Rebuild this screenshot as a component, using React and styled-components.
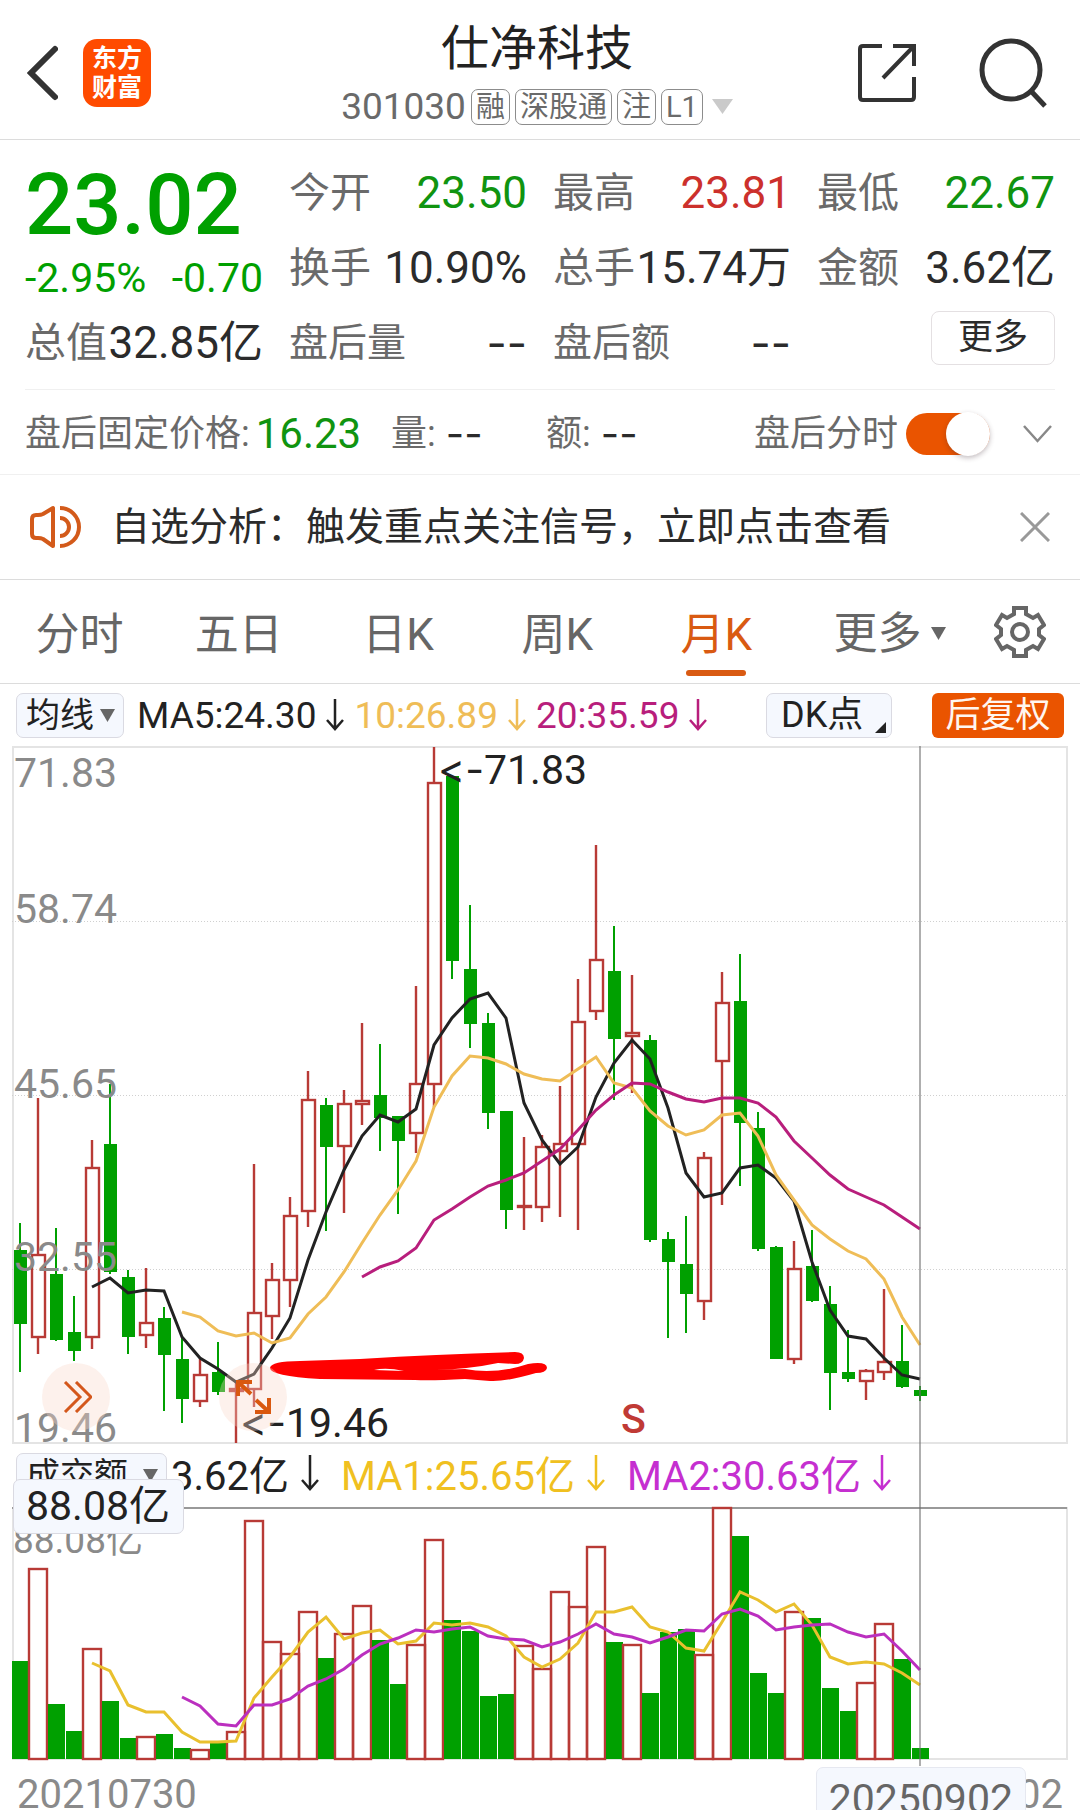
import { useState } from "react";
import styled, { createGlobalStyle, css } from "styled-components";

const GREEN = "#00a000";
const RED = "#b83a36";
const ORANGE = "#ea5400";

const GlobalStyle = createGlobalStyle`
  * {
    box-sizing: border-box;
  }

  body {
    margin: 0;
    background: #fff;
    color: #2b2b2b;
    font-family: Roboto, "Noto Sans CJK SC", sans-serif;
  }

  button,
  select {
    margin: 0;
    padding: 0;
    border: 0;
    background: none;
    color: inherit;
    font-family: inherit;
  }

  svg {
    display: block;
    flex: none;
  }
`;

/* ---------- data ---------- */

const FIRST_X = 20;
const STEP = 18;

// [rise, high, body top, body bottom, low]
const candles = [
  [0, 1223, 1250, 1324, 1372],
  [1, 1098, 1255, 1337, 1354],
  [0, 1228, 1274, 1340, 1341],
  [0, 1296, 1332, 1351, 1361],
  [1, 1140, 1168, 1337, 1349],
  [0, 1084, 1144, 1272, 1274],
  [0, 1270, 1277, 1337, 1354],
  [1, 1268, 1323, 1335, 1348],
  [0, 1307, 1318, 1355, 1411],
  [0, 1337, 1359, 1399, 1423],
  [1, 1359, 1375, 1401, 1407],
  [0, 1342, 1372, 1392, 1395],
  [1, 1382, 1389, 1391, 1443],
  [1, 1164, 1313, 1389, 1407],
  [1, 1263, 1280, 1316, 1339],
  [1, 1197, 1216, 1280, 1307],
  [1, 1071, 1100, 1211, 1227],
  [0, 1098, 1105, 1147, 1231],
  [1, 1090, 1104, 1146, 1213],
  [1, 1023, 1101, 1104, 1125],
  [0, 1044, 1095, 1118, 1151],
  [0, 1116, 1116, 1141, 1214],
  [1, 986, 1084, 1133, 1153],
  [1, 747, 783, 1084, 1107],
  [0, 776, 776, 961, 979],
  [0, 905, 969, 1024, 1048],
  [0, 1013, 1023, 1113, 1129],
  [0, 1111, 1111, 1210, 1229],
  [1, 1137, 1206, 1207, 1230],
  [1, 1135, 1147, 1207, 1222],
  [1, 1086, 1144, 1151, 1217],
  [1, 979, 1022, 1144, 1230],
  [1, 845, 960, 1011, 1020],
  [0, 926, 971, 1039, 1100],
  [1, 975, 1033, 1036, 1093],
  [0, 1035, 1040, 1240, 1242],
  [0, 1232, 1239, 1262, 1338],
  [0, 1216, 1264, 1294, 1333],
  [1, 1152, 1158, 1301, 1320],
  [1, 972, 1003, 1061, 1205],
  [0, 954, 1001, 1123, 1186],
  [0, 1112, 1128, 1249, 1251],
  [0, 1246, 1247, 1359, 1359],
  [1, 1241, 1269, 1359, 1364],
  [0, 1230, 1266, 1301, 1302],
  [0, 1286, 1304, 1373, 1410],
  [0, 1330, 1372, 1379, 1382],
  [1, 1369, 1371, 1381, 1400],
  [1, 1289, 1362, 1372, 1380],
  [0, 1325, 1361, 1387, 1388],
  [0, 1386, 1390, 1396, 1401],
];

const ma5 = [
  1287, 1278, 1293, 1290, 1291, 1337, 1358, 1369, 1382, 1374, 1348, 1318, 1260,
  1212, 1170, 1136, 1115, 1122, 1109, 1045, 1018, 999, 993, 1018, 1103, 1140,
  1164, 1147, 1097, 1063, 1040, 1059, 1108, 1173, 1197, 1193, 1168, 1165, 1178,
  1201, 1262, 1310, 1336, 1339, 1358, 1375, 1379,
];

const ma10 = [
  1312, 1317, 1331, 1336, 1333, 1343, 1338, 1314, 1297, 1272, 1243, 1215, 1190,
  1161, 1107, 1076, 1056, 1058, 1064, 1074, 1079, 1081, 1069, 1057, 1083, 1088,
  1111, 1126, 1135, 1130, 1115, 1113, 1136, 1175, 1200, 1225, 1239, 1251, 1259,
  1279, 1317, 1345,
];

const ma20 = [
  1277, 1267, 1261, 1248, 1220, 1209, 1197, 1186, 1180, 1173, 1161, 1149, 1130,
  1110, 1095, 1083, 1084, 1092, 1099, 1102, 1098, 1098, 1103, 1117, 1141, 1158,
  1175, 1189, 1197, 1205, 1217, 1229,
];

// top of each turnover bar, the colour follows the candle
const volumes = [
  1661, 1569, 1704, 1731, 1649, 1701, 1738, 1737, 1734, 1748, 1750, 1743, 1732,
  1521, 1642, 1654, 1612, 1658, 1634, 1606, 1640, 1684, 1645, 1540, 1620, 1631,
  1696, 1694, 1646, 1669, 1592, 1607, 1547, 1642, 1645, 1693, 1632, 1629, 1655,
  1508, 1536, 1673, 1693, 1612, 1618, 1688, 1711, 1683, 1624, 1659, 1748,
];

const volMa1 = [
  1663, 1671, 1705, 1712, 1712, 1732, 1742, 1742, 1741, 1698, 1677, 1657, 1632,
  1617, 1639, 1633, 1630, 1644, 1641, 1623, 1625, 1623, 1627, 1636, 1657, 1667,
  1659, 1643, 1612, 1612, 1607, 1627, 1632, 1648, 1651, 1622, 1592, 1600, 1612,
  1604, 1625, 1657, 1664, 1662, 1664, 1673, 1685,
];

const volMa2 = [
  1697, 1706, 1724, 1726, 1705, 1705, 1699, 1686, 1679, 1669, 1655, 1644, 1638,
  1630, 1632, 1629, 1627, 1636, 1639, 1640, 1647, 1642, 1634, 1624, 1634, 1637,
  1643, 1637, 1630, 1631, 1614, 1609, 1616, 1630, 1627, 1625, 1624, 1632, 1637,
  1634, 1651, 1670,
];

const priceLabels = [
  ["71.83", 787],
  ["58.74", 923],
  ["45.65", 1098],
  ["32.55", 1271],
  ["19.46", 1442],
];

const tabs = ["分时", "五日", "日K", "周K", "月K"];

const toPoints = (values, start) =>
  values.map((y, i) => `${FIRST_X + STEP * (start + i)},${y}`).join(" ");

/* ---------- header ---------- */

const Header = styled.header`
  display: grid;
  grid-template-columns: 1fr auto 1fr;
  align-items: center;
  height: 140px;
  padding: 6px 33px 0 27px;
  border-bottom: 1px solid #dcdcdc;
`;

const HeaderSide = styled.div`
  display: flex;
  align-items: center;
  justify-content: ${(props) => (props.$end ? "flex-end" : "flex-start")};
  gap: ${(props) => (props.$end ? "63px" : "25px")};
`;

const IconButton = styled.button`
  display: flex;
  align-items: center;
  justify-content: center;
  cursor: pointer;
`;

const Logo = styled.a`
  display: grid;
  place-content: center;
  width: 68px;
  height: 68px;
  border-radius: 14px;
  background: #ff4b00;
  color: #fff;
  font-size: 25px;
  font-weight: 700;
  line-height: 29px;
  text-align: center;
  text-decoration: none;
`;

const Heading = styled.div`
  display: flex;
  flex-direction: column;
  align-items: center;
  gap: 12px;
`;

const Title = styled.h1`
  margin: 0;
  font-size: 48px;
  font-weight: 400;
  line-height: 56px;
  color: #222;
`;

const Meta = styled.div`
  display: flex;
  align-items: center;
  gap: 5px;
  color: #6a6a6a;
`;

const Code = styled.span`
  font-size: 37px;
  line-height: 36px;
`;

const Tag = styled.span`
  height: 36px;
  padding: 0 4px;
  border: 1px solid #8c8c8c;
  border-radius: 7px;
  font-size: 29px;
  line-height: 34px;
`;

const MetaCaret = styled.svg`
  margin-left: 4px;
`;

/* ---------- quote ---------- */

const Quote = styled.section`
  display: grid;
  grid-template-columns: repeat(4, 1fr);
  grid-auto-rows: 75px;
  column-gap: 26px;
  margin: 0 25px;
  padding: 15px 0 9px;
  border-bottom: 1px solid #f0f0f0;
`;

const LastPrice = styled.div`
  grid-row: span 2;
  color: ${GREEN};
`;

const Price = styled.div`
  padding-top: 4px;
  font-size: 85px;
  font-weight: 500;
  line-height: 92px;
`;

const Change = styled.div`
  display: flex;
  justify-content: space-between;
  font-size: 41px;
  line-height: 54px;
`;

const Stat = styled.div`
  display: flex;
  align-items: center;
  justify-content: space-between;
  white-space: nowrap;
`;

const StatLabel = styled.span`
  font-size: ${(props) => (props.$small ? "39px" : "41px")};
  line-height: 56px;
  color: #6a6a6a;
`;

const StatValue = styled.span`
  font-size: 44px;
  line-height: 56px;
  color: ${(props) => props.$color || "#2b2b2b"};
`;

const Dashes = styled.span`
  font-family: Inter, sans-serif;
  font-size: 44px;
  font-feature-settings: "calt" 0;
  line-height: 56px;
`;

const MoreButton = styled.button`
  justify-self: end;
  align-self: start;
  width: 124px;
  height: 54px;
  margin-top: 6px;
  border: 1px solid #e4e0e2;
  border-radius: 8px;
  font-size: 35px;
  line-height: 48px;
  cursor: pointer;
`;

/* ---------- after hours ---------- */

const AfterHours = styled.section`
  display: grid;
  grid-template-columns: 366px 155px 1fr auto 29px;
  align-items: center;
  height: 85px;
  padding: 3px 28px 0 25px;
  border-bottom: 1px solid #f0f0f0;
  font-size: 36px;
  color: #6a6a6a;
`;

const Pair = styled.div`
  display: flex;
  align-items: center;
  gap: ${(props) => props.$gap || 0}px;
  line-height: 52px;
  white-space: nowrap;
`;

const FixedPrice = styled.span`
  font-size: 42px;
  color: #109410;
`;

const SmallDashes = styled(Dashes)`
  font-size: 40px;
  color: #2b2b2b;
`;

const SwitchLabel = styled.label`
  display: flex;
  align-items: center;
  gap: 8px;
  margin-right: 33px;
  line-height: 52px;
`;

const Switch = styled.input`
  appearance: none;
  display: flex;
  align-items: center;
  justify-content: flex-end;
  width: 84px;
  height: 42px;
  margin: 0;
  border-radius: 21px;
  background: ${ORANGE};
  cursor: pointer;

  &::before {
    content: "";
    width: 44px;
    height: 44px;
    border-radius: 50%;
    background: #fff;
    box-shadow: 0 2px 5px rgba(60, 40, 50, 0.3);
  }

  &:not(:checked) {
    justify-content: flex-start;
    background: #ccc;
  }
`;

/* ---------- notice ---------- */

const Notice = styled.section`
  display: flex;
  align-items: center;
  height: 105px;
  padding: 0 30px;
  border-bottom: 1px solid #dcdcdc;
`;

const NoticeText = styled.p`
  flex: 1;
  margin: 0 0 0 29px;
  font-size: 39px;
  line-height: 56px;
`;

/* ---------- tabs ---------- */

const Tabs = styled.nav`
  display: grid;
  grid-template-columns: repeat(5, 1fr) 188px 62px;
  align-items: stretch;
  height: 104px;
  padding-right: 34px;
  border-bottom: 1px solid #dcdcdc;
`;

const Tab = styled.button`
  display: flex;
  flex-direction: column;
  align-items: center;
  justify-content: flex-end;
  gap: 5px;
  padding-bottom: 7px;
  font-size: 44px;
  line-height: 60px;
  color: #666;
  cursor: pointer;

  &::after {
    content: "";
    width: 60px;
    height: 6px;
    border-radius: 3px;
  }

  ${(props) =>
    props.$active &&
    css`
      color: #d95a12;

      &::after {
        background: #d95a12;
      }
    `}
`;

const MoreTab = styled(Tab)`
  flex-direction: row;
  align-items: center;
  justify-content: center;
  gap: 10px;
  padding: 4px 0 0;

  &::after {
    display: none;
  }
`;

const SettingsButton = styled(IconButton)`
  justify-content: flex-end;
`;

/* ---------- chart ---------- */

const ChartArea = styled.main`
  position: relative;
`;

const Legend = styled.div`
  display: flex;
  align-items: center;
  height: ${(props) => (props.$large ? "63px" : "62px")};
  padding: 0 16px;
  font-size: ${(props) => (props.$large ? "40px" : "37px")};
  white-space: nowrap;
`;

const Spacer = styled.div`
  flex: 1;
`;

const chip = css`
  display: flex;
  align-items: center;
  height: 45px;
  border: 1px solid #dadae2;
  border-radius: 7px;
  background: #f5f8fe;
  color: #222;
`;

const Picker = styled.label`
  ${chip}
  width: ${(props) => props.$width}px;
  padding: 0 8px 0 9px;
  justify-content: space-between;

  select {
    appearance: none;
    font-size: 34px;
    line-height: 43px;
    height: 43px;
    cursor: pointer;
  }
`;

const DkButton = styled.button`
  ${chip}
  width: 126px;
  padding: 0 5px 4px 14px;
  align-items: flex-end;
  justify-content: space-between;
  font-size: 36px;
  line-height: 36px;
  cursor: pointer;
`;

const AdjustButton = styled.button`
  width: 132px;
  height: 45px;
  margin-left: 40px;
  border-radius: 6px;
  background: ${ORANGE};
  color: #fff6f0;
  font-size: 35px;
  line-height: 45px;
  cursor: pointer;
`;

const Average = styled.span`
  display: flex;
  align-items: center;
  gap: ${(props) => (props.$large ? "12px" : "10px")};
  margin-left: ${(props) => props.$space}px;
  padding-bottom: ${(props) => (props.$large ? "6px" : 0)};
  color: ${(props) => props.$color};
`;

const Plot = styled.div`
  position: relative;
`;

const Canvas = styled.svg`
  width: 100%;
  height: auto;
  overflow: visible;
  font-size: 41px;
`;

const Pointer = styled.tspan`
  font-family: Inter, sans-serif;
  font-feature-settings: "calt" 0;
`;

const FloatButton = styled.button`
  position: absolute;
  bottom: 13px;
  left: ${(props) => props.$left}px;
  display: grid;
  place-content: center;
  width: 68px;
  height: 68px;
  border-radius: 50%;
  background: rgba(250, 215, 200, 0.35);
  cursor: pointer;
`;

const Crosshair = styled.div`
  position: absolute;
  top: 62px;
  bottom: 44px;
  left: 85.1%;
  width: 2px;
  background: rgba(110, 110, 110, 0.55);
`;

const ValueBadge = styled.div`
  position: absolute;
  top: -28px;
  left: 13px;
  padding: 0 13px 0 12px;
  border: 1px solid #dadae2;
  border-radius: 7px;
  background: #f5f8fe;
  color: #222;
  font-size: 41px;
  line-height: 53px;
`;

const Dates = styled.div`
  position: relative;
  display: flex;
  justify-content: space-between;
  height: 50px;
  padding: 10px 17px;
  overflow: hidden;
  font-size: 40px;
  line-height: 50px;
  color: #8a8a8a;
`;

const DateBadge = styled.div`
  position: absolute;
  top: 7px;
  right: 54px;
  padding: 0 12px;
  border: 1px solid #e6e8f0;
  border-radius: 7px;
  background: #f5f8fe;
  color: #666;
  font-size: 41px;
  line-height: 62px;
`;

const Caret = ({ color = "#666" }) => (
  <svg width="15" height="13" viewBox="0 0 30 26">
    <path d="M0 0H30L15 26Z" fill={color} />
  </svg>
);

const DownArrow = ({ size = 32 }) => (
  <svg width="18" height={size} viewBox={`0 0 18 ${size}`} fill="none">
    <path
      d={`M9 0V${size - 2}M1 ${size - 11}L9 ${size - 2}L17 ${size - 11}`}
      stroke="currentColor"
      strokeWidth="2.5"
    />
  </svg>
);

const Candle = ({ x, data }) => {
  const [rise, high, top, bottom, low] = data;

  if (!rise) {
    return (
      <g fill={GREEN}>
        <rect x={x - 1} y={high} width="2" height={low - high} />
        <rect x={x - 6} y={top} width="13" height={bottom - top} />
      </g>
    );
  }

  return (
    <g stroke={RED} strokeWidth="2.4" fill="none">
      <path d={`M${x} ${high}V${top}M${x} ${bottom}V${low}`} />
      <rect x={x - 6} y={top} width="13" height={bottom - top} />
    </g>
  );
};

const PriceChart = () => (
  <Canvas viewBox="0 746 1080 698" role="img" aria-label="月K线">
    <rect x="13" y="747" width="1054" height="696" fill="none" stroke="#e4e4e4" strokeWidth="2" />
    {[921, 1095, 1269].map((y) => (
      <path key={y} d={`M12 ${y}.5H1067`} stroke="#d0d0d0" strokeDasharray="1 2" />
    ))}

    {candles.map((data, i) => (
      <Candle key={i} x={FIRST_X + STEP * i} data={data} />
    ))}

    <g fill="none" strokeWidth="3">
      <polyline points={toPoints(ma5, 4)} stroke="#222" />
      <polyline points={toPoints(ma10, 9)} stroke="#efbd57" />
      <polyline points={toPoints(ma20, 19)} stroke="#b81e7c" />
    </g>

    {priceLabels.map(([label, y]) => (
      <text key={label} x="14" y={y} fill="#8a8a8a">
        {label}
      </text>
    ))}

    <g fill="#222">
      <text x="438" y="784">
        <Pointer>&lt;-</Pointer>71.83
      </text>
      <text x="240" y="1437">
        <Pointer>&lt;-</Pointer>19.46
      </text>
    </g>
    <text x="621" y="1433" fill="#c03a35" fontWeight="500">
      S
    </text>

    {/* hand drawn support line */}
    <path
      d="M270 1368Q271 1361 300 1361L360 1359Q440 1354 515 1352Q524 1352 524 1358Q523 1364 515 1364L498 1363Q470 1369 435 1370L465 1369Q495 1375 528 1364Q547 1361 547 1368Q546 1373 536 1373Q505 1382 490 1381L465 1379Q430 1381 415 1380L320 1379Q270 1376 270 1368Z"
      fill="#f00"
    />
    <path d="M374 1370Q386 1367 404 1371Z" fill="#fff" />
  </Canvas>
);

const VolumeChart = () => (
  <Canvas viewBox="0 1507 1080 253" role="img" aria-label="成交额">
    <path d="M13 1507V1759H1067V1507" fill="none" stroke="#e4e4e4" strokeWidth="2" />
    <path d="M12 1508H1067" stroke="#999" strokeWidth="2" />
    <text x="13" y="1553" fill="#8a8a8a" fontSize="37">
      88.08亿
    </text>

    {volumes.map((y, i) => {
      const x = 12 + STEP * i;
      return candles[i][0] ? (
        <rect key={i} x={x - 1} y={y} width="18" height={1759 - y} fill="none" stroke={RED} strokeWidth="2.4" />
      ) : (
        <rect key={i} x={x} y={y} width="17" height={1759 - y} fill={GREEN} />
      );
    })}

    <g fill="none" strokeWidth="3">
      <polyline points={toPoints(volMa1, 4)} stroke="#e9c02e" />
      <polyline points={toPoints(volMa2, 9)} stroke="#bb2fbf" />
    </g>
  </Canvas>
);

const App = () => {
  const [activeTab, setActiveTab] = useState("月K");
  const [showAfter, setShowAfter] = useState(true);

  return (
    <>
      <GlobalStyle />
      <Header>
        <HeaderSide>
          <IconButton aria-label="返回">
            <svg width="31" height="56" viewBox="0 0 31 56" fill="none" stroke="#333" strokeWidth="6" strokeLinecap="round">
              <path d="M28 4L4 28L28 52" />
            </svg>
          </IconButton>
          <Logo href="#">
            东方
            <br />
            财富
          </Logo>
        </HeaderSide>
        <Heading>
          <Title>仕净科技</Title>
          <Meta>
            <Code>301030</Code>
            <Tag>融</Tag>
            <Tag>深股通</Tag>
            <Tag>注</Tag>
            <Tag>L1</Tag>
            <MetaCaret width="21" height="15" viewBox="0 0 42 30">
              <path d="M0 0H42L21 30Z" fill="#cacaca" />
            </MetaCaret>
          </Meta>
        </Heading>
        <HeaderSide $end>
          <IconButton aria-label="分享">
            <svg width="58" height="59" viewBox="0 0 58 59" fill="none" stroke="#333" strokeWidth="4">
              <path d="M24 3H5Q2 3 2 6V54Q2 57 5 57H53Q56 57 56 54V34" />
              <path d="M35 3H56V23M56 3L25 35" />
            </svg>
          </IconButton>
          <IconButton aria-label="搜索">
            <svg width="68" height="70" viewBox="0 0 68 70" fill="none" stroke="#333" strokeWidth="5">
              <circle cx="32" cy="32" r="29" />
              <path d="M52 53L66 68" />
            </svg>
          </IconButton>
        </HeaderSide>
      </Header>

      <Quote>
        <LastPrice>
          <Price>23.02</Price>
          <Change>
            <span>-2.95%</span>
            <span>-0.70</span>
          </Change>
        </LastPrice>
        <Stat>
          <StatLabel>今开</StatLabel>
          <StatValue $color="#109410">23.50</StatValue>
        </Stat>
        <Stat>
          <StatLabel>最高</StatLabel>
          <StatValue $color="#cc302c">23.81</StatValue>
        </Stat>
        <Stat>
          <StatLabel>最低</StatLabel>
          <StatValue $color="#109410">22.67</StatValue>
        </Stat>
        <Stat>
          <StatLabel>换手</StatLabel>
          <StatValue>10.90%</StatValue>
        </Stat>
        <Stat>
          <StatLabel>总手</StatLabel>
          <StatValue>15.74万</StatValue>
        </Stat>
        <Stat>
          <StatLabel>金额</StatLabel>
          <StatValue>3.62亿</StatValue>
        </Stat>
        <Stat>
          <StatLabel>总值</StatLabel>
          <StatValue>32.85亿</StatValue>
        </Stat>
        <Stat>
          <StatLabel $small>盘后量</StatLabel>
          <Dashes>--</Dashes>
        </Stat>
        <Stat>
          <StatLabel $small>盘后额</StatLabel>
          <Dashes>--</Dashes>
        </Stat>
        <MoreButton>更多</MoreButton>
      </Quote>

      <AfterHours>
        <Pair $gap={6}>
          <span>盘后固定价格:</span>
          <FixedPrice>16.23</FixedPrice>
        </Pair>
        <Pair $gap={10}>
          <span>量:</span>
          <SmallDashes>--</SmallDashes>
        </Pair>
        <Pair $gap={10}>
          <span>额:</span>
          <SmallDashes>--</SmallDashes>
        </Pair>
        <SwitchLabel>
          盘后分时
          <Switch type="checkbox" checked={showAfter} onChange={() => setShowAfter(!showAfter)} />
        </SwitchLabel>
        <IconButton aria-label="展开">
          <svg width="29" height="18" viewBox="0 0 29 18" fill="none" stroke="#888" strokeWidth="2.5">
            <path d="M1 1L14.5 16L28 1" />
          </svg>
        </IconButton>
      </AfterHours>

      <Notice>
        <svg width="52" height="44" viewBox="0 0 52 44" fill="none" stroke="#d35a1a" strokeWidth="4">
          <path d="M23 3V41L13 34Q11 33 8 33H6Q2 33 2 29V14Q2 10 6 10H8Q11 10 13 9Z" strokeLinejoin="round" />
          <path d="M30 3A19 19 0 0 1 30 41M30 13A9 9 0 0 1 30 31" />
        </svg>
        <NoticeText>自选分析：触发重点关注信号，立即点击查看</NoticeText>
        <IconButton aria-label="关闭">
          <svg width="30" height="30" viewBox="0 0 30 30" stroke="#999" strokeWidth="3">
            <path d="M1 1L29 29M29 1L1 29" />
          </svg>
        </IconButton>
      </Notice>

      <Tabs>
        {tabs.map((tab) => (
          <Tab key={tab} $active={tab === activeTab} onClick={() => setActiveTab(tab)}>
            {tab}
          </Tab>
        ))}
        <MoreTab>
          更多
          <Caret />
        </MoreTab>
        <SettingsButton aria-label="设置">
          <svg width="52" height="54" viewBox="0 0 52 54" fill="none" stroke="#666" strokeWidth="4">
            <path d="M20 3H32V9L39 13L44 10L50 20L45 24V30L50 34L44 44L39 41L32 45V51H20V45L13 41L8 44L2 34L7 30V24L2 20L8 10L13 13L20 9Z" />
            <circle cx="26" cy="27" r="8" />
          </svg>
        </SettingsButton>
      </Tabs>

      <ChartArea>
        <Legend>
          <Picker $width={108}>
            <select aria-label="主图指标">
              <option>均线</option>
            </select>
            <Caret />
          </Picker>
          <Average $space={13} $color="#222">
            MA5:24.30
            <DownArrow />
          </Average>
          <Average $space={10} $color="#efbd57">
            10:26.89
            <DownArrow />
          </Average>
          <Average $space={10} $color="#b81e7c">
            20:35.59
            <DownArrow />
          </Average>
          <Spacer />
          <DkButton>
            DK点
            <svg width="11" height="11" viewBox="0 0 11 11">
              <path d="M11 0V11H0Z" fill="#222" />
            </svg>
          </DkButton>
          <AdjustButton>后复权</AdjustButton>
        </Legend>

        <Plot>
          <PriceChart />
          <FloatButton $left={42} aria-label="展开侧栏">
            <svg width="32" height="32" viewBox="0 0 32 32" fill="none" stroke="#d4571b" strokeWidth="3">
              <path d="M5 1L20 16L5 31M16 1L31 16L16 31" />
            </svg>
          </FloatButton>
          <FloatButton $left={219} aria-label="放大">
            <svg width="36" height="36" viewBox="0 0 36 36" fill="none" stroke="#d9580f" strokeWidth="4">
              <path d="M17 3H3V17M3 3L16 15M34 19V33H20M34 33L21 21" />
            </svg>
          </FloatButton>
        </Plot>

        <Legend $large>
          <Picker $width={151}>
            <select aria-label="副图指标">
              <option>成交额</option>
            </select>
            <Caret />
          </Picker>
          <Average $large $space={4} $color="#222">
            3.62亿
            <DownArrow size={36} />
          </Average>
          <Average $large $space={22} $color="#f0c020">
            MA1:25.65亿
            <DownArrow size={36} />
          </Average>
          <Average $large $space={22} $color="#c52fd0">
            MA2:30.63亿
            <DownArrow size={36} />
          </Average>
        </Legend>

        <Plot>
          <VolumeChart />
          <ValueBadge>88.08亿</ValueBadge>
        </Plot>
        <Crosshair />

        <Dates>
          <span>20210730</span>
          <span>20250902</span>
          <DateBadge>20250902</DateBadge>
        </Dates>
      </ChartArea>
    </>
  );
};

export default App;
